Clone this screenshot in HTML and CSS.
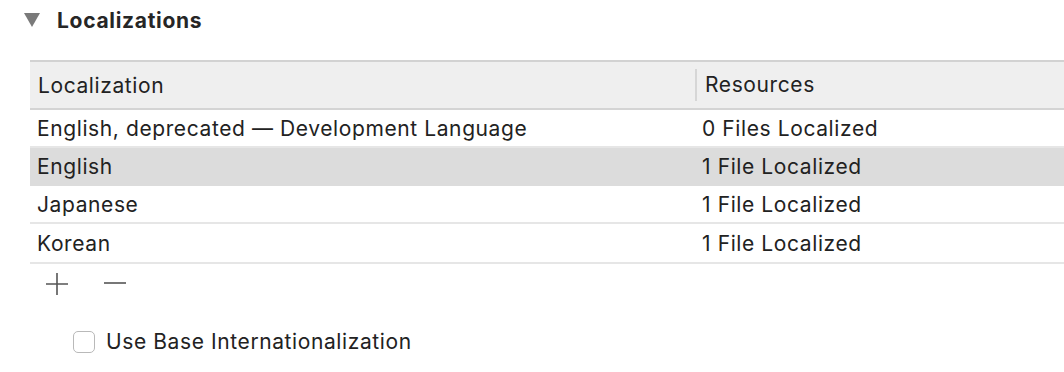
FILE: index.html
```html
<!DOCTYPE html>
<html lang="en">
<head>
    <meta charset="UTF-8">
    <title>Localizations</title>
    <link rel="stylesheet" href="styles.css">
</head>
<body>
    <section class="panel">
        <div class="panel-title">
            <span class="disclosure"></span>
            <h2>Localizations</h2>
        </div>

        <div class="table">
            <div class="row head">
                <div class="cell">Localization</div>
                <div class="cell res">Resources</div>
            </div>
            <div class="row">
                <div class="cell">English, deprecated — Development Language</div>
                <div class="cell res">0 Files Localized</div>
            </div>
            <div class="row selected">
                <div class="cell">English</div>
                <div class="cell res">1 File Localized</div>
            </div>
            <div class="row">
                <div class="cell">Japanese</div>
                <div class="cell res">1 File Localized</div>
            </div>
            <div class="row">
                <div class="cell">Korean</div>
                <div class="cell res">1 File Localized</div>
            </div>
        </div>

        <div class="tools">
            <button class="tool" title="Add">
                <svg width="24" height="24" viewBox="0 0 24 24"><path d="M12 1v22M1 12h22" stroke="#555" stroke-width="1.6" fill="none"/></svg>
            </button>
            <button class="tool" title="Remove">
                <svg width="24" height="24" viewBox="0 0 24 24"><path d="M1 11h22" stroke="#555" stroke-width="1.6" fill="none"/></svg>
            </button>
        </div>

        <label class="check">
            <span class="box"></span>
            Use Base Internationalization
        </label>
    </section>
</body>
</html>
```

FILE: styles.css
```css
body {
    margin: 0;
    background: #fff;
    font-family: "Inter", "Liberation Sans", sans-serif;
    color: #222;
}

.panel {
    padding: 8px 0 0 0;
}

.panel-title {
    display: flex;
    align-items: center;
    height: 24px;
    padding-left: 24px;
}

.disclosure {
    width: 0;
    height: 0;
    border-left: 8px solid transparent;
    border-right: 8px solid transparent;
    border-top: 14px solid #7a7a7a;
    margin-right: 17px;
}

.panel-title h2 {
    margin: 0;
    font-size: 21px;
    font-weight: 700;
    letter-spacing: 0.7px;
    color: #262626;
}

.table {
    margin: 28px 0 0 30px;
    border-top: 2px solid #d2d2d2;
}

.row {
    display: grid;
    grid-template-columns: 665px 1fr;
    height: 36px;
    align-items: center;
    border-bottom: 2px solid #e6e6e6;
    font-size: 21px;
    letter-spacing: 0.6px;
}

.row.head {
    height: 46px;
    background: #efefef;
    border-bottom: 2px solid #d4d4d4;
}

.row.head .cell {
    padding-left: 8px;
}

.row.head .res {
    border-left: 2px solid #d6d6d6;
    padding-left: 8px;
    height: 32px;
    line-height: 32px;
}

.row.selected {
    background: #dcdcdc;
    border-bottom-color: #dcdcdc;
}

.row:last-child {
    height: 38px;
}

.cell {
    padding-left: 7px;
    white-space: nowrap;
}

.res {
    padding-left: 7px;
}

.tools {
    display: flex;
    gap: 34px;
    padding: 8px 0 0 45px;
}

.tool {
    border: none;
    background: none;
    padding: 0;
    width: 24px;
    height: 24px;
}

.check {
    display: flex;
    align-items: center;
    gap: 11px;
    margin: 33px 0 0 73px;
    font-size: 21px;
    letter-spacing: 0.6px;
}

.box {
    width: 20px;
    height: 20px;
    border: 1px solid #b9b9b9;
    border-radius: 5px;
    background: #fff;
}
```
